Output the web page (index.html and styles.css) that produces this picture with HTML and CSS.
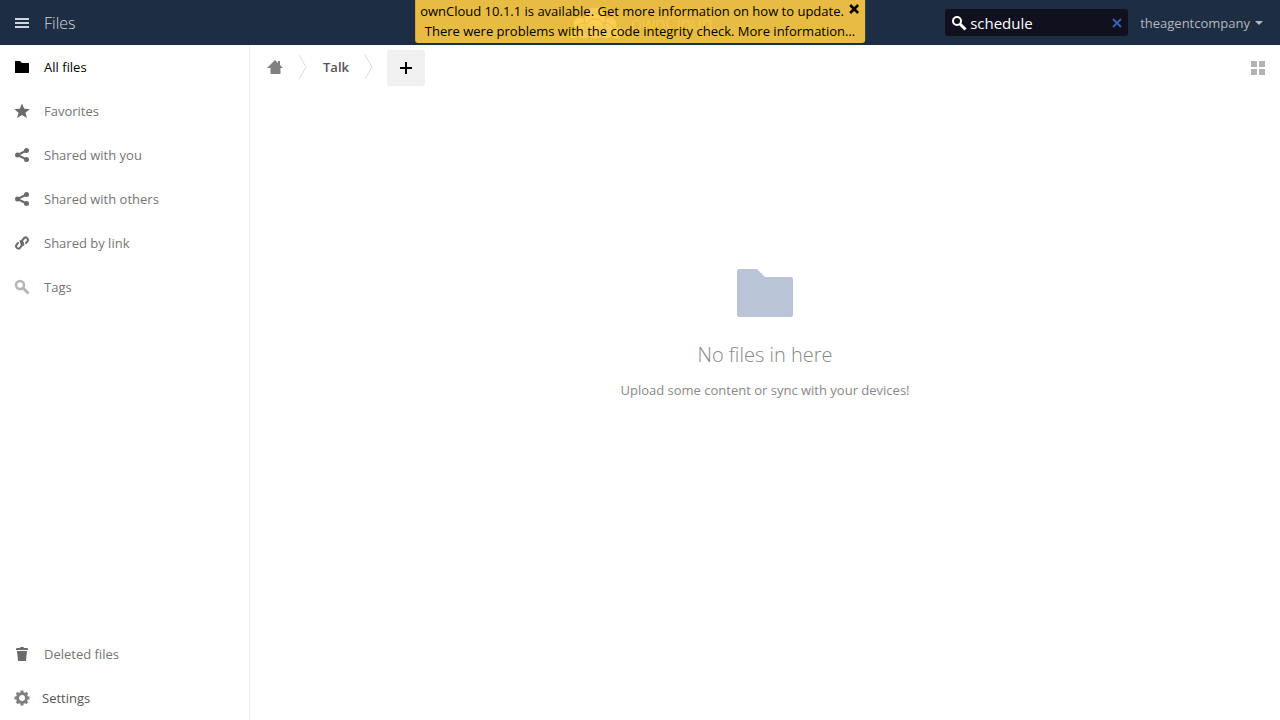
FILE: index.html
```html
<!DOCTYPE html>
<html lang="en">
<head>
<meta charset="utf-8">
<title>Files - ownCloud</title>
<link rel="stylesheet" href="styles.css">
</head>
<body>
<header class="header">
  <button class="menu-toggle" type="button">
    <svg width="16" height="16" viewBox="0 0 16 16" aria-hidden="true"><path fill="#d2d6da" d="M1 3h14v2H1zM1 7h14v2H1zM1 11h14v2H1z"/></svg>
    <span class="app-name">Files</span>
  </button>
  <a class="brand" href="#">
    <svg class="brand-mark" width="56" height="34" viewBox="0 0 56 34" aria-hidden="true"><g fill="#fff" stroke="#1d2d44"><circle cx="13" cy="18" r="7"/><circle cx="43" cy="18" r="7"/><circle cx="28" cy="12" r="11"/><circle cx="6" cy="28" r="5"/><circle cx="50" cy="27" r="6"/><circle cx="17" cy="25" r="8"/><circle cx="39" cy="25" r="8"/><circle cx="28" cy="23" r="10"/></g></svg>
    <span class="brand-name">ownCloud</span>
  </a>
  <div class="header-right">
    <form class="search">
      <svg class="search-icon" width="16" height="16" viewBox="0 0 16 16" aria-hidden="true"><circle cx="6" cy="6" r="4" fill="none" stroke="#fff" stroke-width="2"/><path d="M9 9l5.500 5.500" stroke="#fff" stroke-width="3"/></svg>
      <input class="search-input" type="text" value="schedule" aria-label="Search">
      <button class="search-clear" type="reset" aria-label="Clear search"><svg width="10" height="10" viewBox="0 0 10 10"><path d="M1 1l8 8M9 1l-8 8" stroke="#3763ae" stroke-width="2"/></svg></button>
    </form>
    <button class="user-menu" type="button">theagentcompany <svg width="8" height="4" viewBox="0 0 8 4" aria-hidden="true"><path fill="#b5bbc3" d="M0 0h8L4 4z"/></svg></button>
  </div>
  <div class="notification" role="status">
    <div class="notice-row">ownCloud 10.1.1 is available. Get more information on how to update.
      <button class="notice-close" type="button" aria-label="Dismiss"><svg width="12" height="12" viewBox="0 0 12 12"><path d="M2 2l8 8M10 2l-8 8" stroke="#000" stroke-width="2.5"/></svg></button>
    </div>
    <div class="notice-row">There were problems with the code integrity check. More information…</div>
  </div>
</header>
<div class="body">
  <nav class="sidebar">
    <ul class="nav-list">
      <li><a class="nav-link active" href="#"><svg width="16" height="16" viewBox="0 0 16 16"><path d="M1.500 2H6l2 2h6.500q.5 0 .5.500v9q0 .5-.5.500h-13q-.5 0-.5-.5v-11q0-.5.5-.5z"/></svg>All files</a></li>
      <li><a class="nav-link" href="#"><svg width="16" height="16" viewBox="0 0 16 16"><path d="M8 .5l2.200 5.200 5.600.4-4.300 3.600L12.900 15 8 12.100 3.100 15l1.400-5.300L.2 6.100l5.600-.4z"/></svg>Favorites</a></li>
      <li><a class="nav-link" href="#"><svg width="16" height="16" viewBox="0 0 16 16"><path d="M12.500 3.500L3.500 8l9 4.500" fill="none" stroke="#6b6b6b" stroke-width="2"/><circle cx="12.500" cy="3.500" r="2.500"/><circle cx="3.500" cy="8" r="2.500"/><circle cx="12.500" cy="12.500" r="2.500"/></svg>Shared with you</a></li>
      <li><a class="nav-link" href="#"><svg width="16" height="16" viewBox="0 0 16 16"><path d="M12.500 3.500L3.500 8l9 4.500" fill="none" stroke="#6b6b6b" stroke-width="2"/><circle cx="12.500" cy="3.500" r="2.500"/><circle cx="3.500" cy="8" r="2.500"/><circle cx="12.500" cy="12.500" r="2.500"/></svg>Shared with others</a></li>
      <li><a class="nav-link" href="#"><svg width="16" height="16" viewBox="0 0 16 16"><g fill="none" stroke="#6b6b6b" stroke-width="2" stroke-linecap="round"><path d="M9.500 9.800C8 10 6.200 8 7.200 6.500l3-3.500c1.500-1.500 4.800.5 3.500 3L12 8"/><path d="M6.500 6.200C8 6 9.800 8 8.800 9.500l-3 3.500c-1.500 1.500-4.800-.5-3.500-3L4 8"/></g></svg>Shared by link</a></li>
      <li><a class="nav-link" href="#"><svg width="16" height="16" viewBox="0 0 16 16"><circle cx="6" cy="6" r="4" fill="none" stroke="#b5b5b5" stroke-width="2.500"/><path d="M9 9l5.500 5.500" stroke="#b5b5b5" stroke-width="3"/></svg>Tags</a></li>
    </ul>
    <div class="nav-bottom">
      <a class="nav-link" href="#"><svg width="16" height="16" viewBox="0 0 16 16"><path d="M6.500 1h3l.5 1h3q1 0 1 1v1H2V3q0-1 1-1h3zM3 5h10l-1 9.500q0 .5-.5.500h-7q-.5 0-.5-.5z"/></svg>Deleted files</a>
      <button class="settings" type="button"><svg width="16" height="16" viewBox="0 0 16 16"><g fill="none" stroke="#808080"><circle cx="8" cy="8" r="4.500" stroke-width="3"/><path stroke-width="3" d="M8 .5v2.500M8 13v2.500M.5 8H3M13 8h2.500M2.700 2.700l1.800 1.800M11.500 11.500l1.800 1.800M2.700 13.300l1.800-1.800M11.500 4.500l1.800-1.800"/></g></svg>Settings</button>
    </div>
  </nav>
  <main class="content">
    <div class="controls">
      <nav class="breadcrumb" aria-label="Breadcrumb">
        <a class="crumb-home" href="#" aria-label="Home"><svg width="16" height="16" viewBox="0 0 16 16"><path fill="#808080" d="M8 1l3 3V2h2v4l3 3h-2.500v6h-10V9H0z"/></svg></a>
        <svg class="crumb-sep" width="10" height="26" viewBox="0 0 10 26" aria-hidden="true"><path d="M1 1l7 12-7 12" fill="none" stroke="#ddd"/></svg>
        <a class="crumb" href="#">Talk</a>
        <svg class="crumb-sep" width="10" height="26" viewBox="0 0 10 26" aria-hidden="true"><path d="M1 1l7 12-7 12" fill="none" stroke="#ddd"/></svg>
      </nav>
      <button class="new-button" type="button" aria-label="New"><svg width="16" height="16" viewBox="0 0 16 16"><path d="M7 2h2v5h5v2H9v5H7V9H2V7h5z"/></svg></button>
      <button class="view-toggle" type="button" aria-label="Grid view"><svg width="14" height="14" viewBox="0 0 14 14"><path fill="#b2b2b2" d="M0 0h6v6H0zM8 0h6v6H8zM0 8h6v6H0zM8 8h6v6H8z"/></svg></button>
    </div>
    <section class="empty">
      <svg width="56" height="48" viewBox="0 0 56 48" aria-hidden="true"><path fill="#b9c5d6" d="M2 0h18l8 8h26q2 0 2 2v36q0 2-2 2H2q-2 0-2-2V2q0-2 2-2z"/></svg>
      <h2 class="empty-title">No files in here</h2>
      <p class="empty-text">Upload some content or sync with your devices!</p>
    </section>
  </main>
</div>
</body>
</html>
```
FILE: styles.css
```css
* { box-sizing: border-box; }
body {
  margin: 0;
  min-height: 100vh;
  display: flex;
  flex-direction: column;
  background: #fff;
  font: 13px/20px "Open Sans", sans-serif;
  color: #000;
}
button, input { font: inherit; border: 0; padding: 0; background: none; }
a { text-decoration: none; }
svg { display: block; flex: none; }

.header {
  position: relative;
  display: grid;
  grid-template-columns: 1fr auto 1fr;
  align-items: center;
  height: 45px;
  background: #1d2d44;
}
.menu-toggle { display: flex; align-items: center; gap: 14px; padding-left: 14px; }
.app-name { font-size: 16px; font-weight: 300; color: #d2d6da; }
.brand { display: flex; align-items: center; gap: 8px; color: #fff; }
.brand-mark { opacity: 0.8; }
.brand-name { font-size: 18px; font-weight: 300; opacity: 0.6; }
.header-right { display: flex; justify-content: flex-end; align-items: center; gap: 12px; padding-right: 17px; }
.search { position: relative; }
.search-icon { position: absolute; left: 6px; top: 6px; }
.search-input {
  display: block;
  width: 183px;
  height: 27px;
  padding: 0 24px 0 25px;
  border-radius: 3px;
  background: #11101f;
  color: #fff;
  font-size: 15px;
}
.search-clear { position: absolute; right: 6px; top: 9px; }
.user-menu { display: flex; align-items: center; gap: 5px; color: #b5b7bb; }

.notification {
  position: absolute;
  top: 0;
  left: 50%;
  transform: translateX(-50%);
  padding: 1px 5px 2px;
  border-radius: 0 0 3px 3px;
  background: rgba(255, 204, 68, 0.9);
  white-space: nowrap;
}
.notice-row { display: flex; justify-content: center; gap: 4px; }
.notice-close { align-self: flex-start; padding-top: 2px; }

.body { flex: 1; display: flex; }
.sidebar {
  width: 250px;
  display: flex;
  flex-direction: column;
  justify-content: space-between;
  border-right: 1px solid #eee;
}
.nav-list { margin: 0; padding: 0; list-style: none; }
.nav-link, .settings { display: flex; align-items: center; gap: 14px; height: 44px; padding: 0 14px; }
.nav-link { color: #757575; fill: #6b6b6b; }
.nav-link.active { color: #000; fill: #000; }
.settings { gap: 12px; color: #555; }

.content { flex: 1; display: flex; flex-direction: column; }
.controls { display: flex; align-items: center; height: 46px; padding: 0 15px 0 17px; }
.breadcrumb { display: flex; align-items: center; gap: 15px; padding-bottom: 2px; }
.crumb { font-weight: 600; color: #555; }
.new-button { margin-left: 13px; padding: 10px 11px; border-radius: 3px; background: #f0f0f0; }
.view-toggle { margin-left: auto; }
.empty { display: flex; flex-direction: column; align-items: center; padding-top: 178px; text-align: center; color: #888; }
.empty-title { margin: 23px 0 10px; font-size: 20px; line-height: 30px; font-weight: 300; }
.empty-text { margin: 0; }
```
